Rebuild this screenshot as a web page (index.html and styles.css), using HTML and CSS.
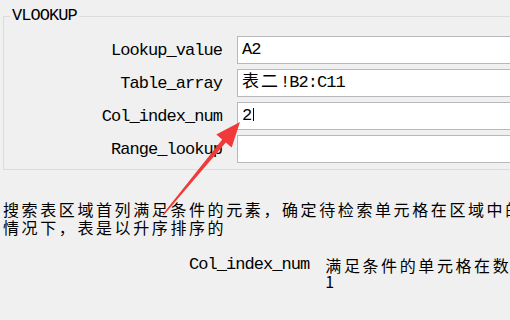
FILE: index.html
```html
<!DOCTYPE html>
<html lang="zh-CN">
<head>
  <meta charset="UTF-8" />
  <title>VLOOKUP</title>
  <link rel="stylesheet" href="styles.css">
</head>
<body>
  <fieldset class="group">
    <legend>VLOOKUP</legend>
    <div class="args">
      <label>Lookup_value</label>
      <div class="box">A2</div>

      <label>Table_array</label>
      <div class="box"><span class="cjk">表二</span>!B2:C11</div>

      <label>Col_index_num</label>
      <div class="box">2<span class="caret"></span></div>

      <label>Range_lookup</label>
      <div class="box"></div>
    </div>
  </fieldset>

  <!-- function description -->
  <div class="desc">
    <div>搜索表区域首列满足条件的元素，确定待检索单元格在区域中的</div>
    <div>情况下，表是以升序排序的</div>
  </div>

  <div class="param">
    <span class="param-name">Col_index_num</span>
    <div class="param-text">
      <div>满足条件的单元格在数</div>
      <div>1</div>
    </div>
  </div>

  <!-- annotation arrow -->
  <svg class="arrow" width="510" height="320" viewBox="0 0 510 320">
    <polygon fill="#f03a3a" points="162.5,214.5 163.7,215.3 225.8,142.4 231.7,147.4 240,122 216.3,134.6 222.2,139.6" />
  </svg>
</body>
</html>
```

FILE: styles.css
```css
body {
  margin: 0;
  background: #f0f0f0;
  color: #000;
  font-family: "Liberation Mono", "Noto Sans CJK SC", monospace;
  font-size: 17px;
  letter-spacing: -0.95px;
  width: 510px;
  height: 320px;
  overflow: hidden;
  position: relative;
}
.group {
  margin: 8px 0 0 3px;
  padding: 12px 0 6px 0;
  border: 1px solid #dcdcdc;
  border-right: none;
  width: 640px;
  min-width: 0;
}
.group legend {
  margin-left: 6px;
  padding: 0 2px;
  line-height: 16px;
}
.args {
  display: grid;
  grid-template-columns: 218px 400px;
  grid-auto-rows: 28px;
  column-gap: 15px;
  row-gap: 5px;
  align-items: center;
}
.args label {
  text-align: right;
  white-space: nowrap;
  line-height: 16px;
  padding-top: 2px;
}
.box {
  height: 26px;
  border: 1px solid #b8b8bc;
  background: #fff;
  padding-left: 4px;
  line-height: 26px;
  white-space: nowrap;
  box-sizing: content-box;
}
.cjk {
  letter-spacing: 2px;
}
.caret {
  display: inline-block;
  width: 0;
  height: 13px;
  border-left: 1px solid #000;
  margin-left: 2px;
  vertical-align: -1px;
}
.desc {
  margin-top: 30px;
  padding-left: 3px;
  font-family: "Noto Sans CJK SC", sans-serif;
  font-size: 16px;
  letter-spacing: 2.6px;
  line-height: 18px;
  white-space: nowrap;
}
.param {
  display: flex;
  gap: 16px;
  margin-top: 21px;
  padding-left: 189px;
  line-height: 16px;
  white-space: nowrap;
}
.param-text {
  font-family: "Noto Sans CJK SC", sans-serif;
  font-size: 16px;
  letter-spacing: 2.6px;
}
.arrow {
  position: absolute;
  top: 0;
  left: 0;
  pointer-events: none;
}
```
